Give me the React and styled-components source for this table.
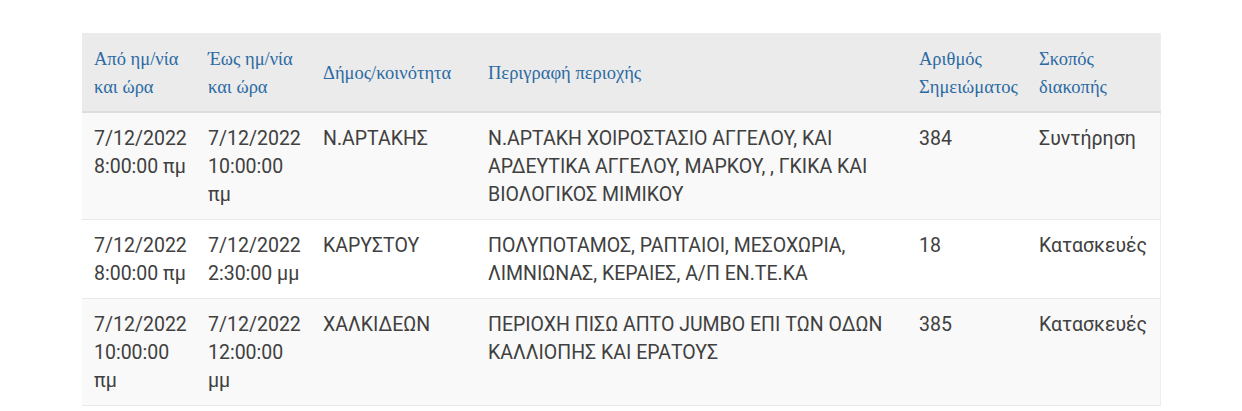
import styled, { createGlobalStyle } from "styled-components";

const GlobalStyle = createGlobalStyle`
	body {
		margin: 0;
		background: #ffffff;
	}
`;

const columns = [
	{ title: "Από ημ/νία και ώρα", width: 114 },
	{ title: "Έως ημ/νία και ώρα", width: 115 },
	{ title: "Δήμος/κοινότητα", width: 165 },
	{ title: "Περιγραφή περιοχής", width: 431 },
	{ title: "Αριθμός Σημειώματος", width: 120 },
	{ title: "Σκοπός διακοπής", width: 133 },
];

const rows = [
	[
		"7/12/2022 8:00:00 πμ",
		"7/12/2022 10:00:00 πμ",
		"Ν.ΑΡΤΑΚΗΣ",
		"Ν.ΑΡΤΑΚΗ ΧΟΙΡΟΣΤΑΣΙΟ ΑΓΓΕΛΟΥ, ΚΑΙ ΑΡΔΕΥΤΙΚΑ ΑΓΓΕΛΟΥ, ΜΑΡΚΟΥ, , ΓΚΙΚΑ ΚΑΙ ΒΙΟΛΟΓΙΚΟΣ ΜΙΜΙΚΟΥ",
		"384",
		"Συντήρηση",
	],
	[
		"7/12/2022 8:00:00 πμ",
		"7/12/2022 2:30:00 μμ",
		"ΚΑΡΥΣΤΟΥ",
		"ΠΟΛΥΠΟΤΑΜΟΣ, ΡΑΠΤΑΙΟΙ, ΜΕΣΟΧΩΡΙΑ, ΛΙΜΝΙΩΝΑΣ, ΚΕΡΑΙΕΣ, Α/Π ΕΝ.ΤΕ.ΚΑ",
		"18",
		"Κατασκευές",
	],
	[
		"7/12/2022 10:00:00 πμ",
		"7/12/2022 12:00:00 μμ",
		"ΧΑΛΚΙΔΕΩΝ",
		"ΠΕΡΙΟΧΗ ΠΙΣΩ ΑΠΤΟ JUMBO ΕΠΙ ΤΩΝ ΟΔΩΝ ΚΑΛΛΙΟΠΗΣ ΚΑΙ ΕΡΑΤΟΥΣ",
		"385",
		"Κατασκευές",
	],
];

const App = () => {
	return (
		<Page>
			<GlobalStyle />
			<Table>
				<colgroup>
					{columns.map((col) => (
						<col key={col.title} style={{ width: col.width }} />
					))}
				</colgroup>
				<thead>
					<tr>
						{columns.map((col) => (
							<HeadCell key={col.title}>{col.title}</HeadCell>
						))}
					</tr>
				</thead>
				<tbody>
					{rows.map((row, i) => (
						<Row key={i} $striped={i % 2 === 0}>
							{row.map((cell, j) => (
								<Cell key={j}>{cell}</Cell>
							))}
						</Row>
					))}
				</tbody>
			</Table>
		</Page>
	);
};

export default App;

const Page = styled.div`
	padding: 33px 0 0 82px;
`;

const Table = styled.table`
	width: 1078px;
	table-layout: fixed;
	border-collapse: collapse;
	border-right: 1px solid #eeeeee;
`;

const HeadCell = styled.th`
	background-color: #ebebeb;
	border-bottom: 2px solid #dddddd;
	padding: 12px 4px 10px 12px;
	text-align: left;
	vertical-align: middle;
	font-family: "Liberation Serif", "DejaVu Serif", serif;
	font-weight: normal;
	font-size: 18.5px;
	line-height: 28px;
	color: #2c6aa3;
`;

const Row = styled.tr`
	background-color: ${(props) => (props.$striped ? "#f9f9f9" : "#ffffff")};
	border-bottom: 1px solid #e9e9e9;
`;

const Cell = styled.td`
	padding: 12px 5px 10px 12px;
	vertical-align: top;
	font-family: Roboto, "Noto Sans", sans-serif;
	font-size: 19.5px;
	line-height: 28px;
	color: #404040;
`;
